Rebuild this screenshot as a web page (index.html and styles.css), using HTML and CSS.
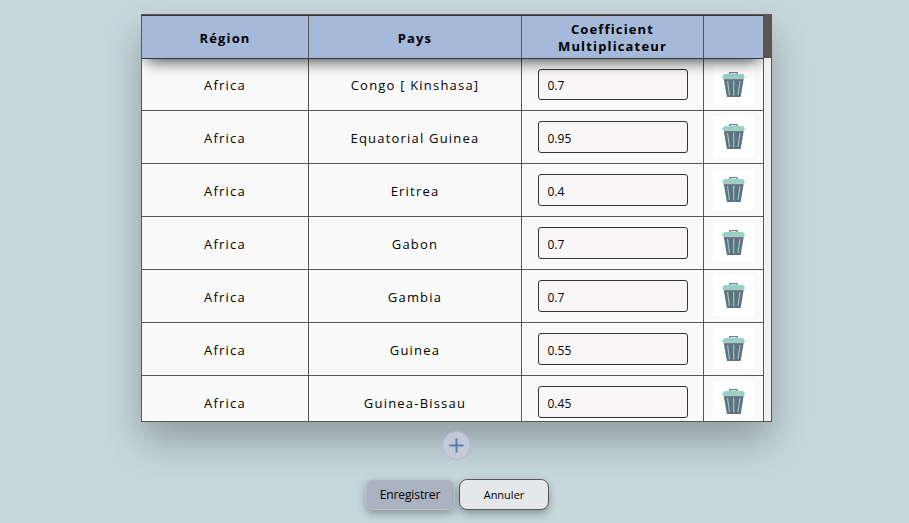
FILE: index.html
```html
<!DOCTYPE html>
<html lang="fr">
<head>
  <meta charset="UTF-8" />
  <meta name="viewport" content="width=device-width, initial-scale=1.0"/>
  <title>Coefficients par pays</title>
  <link rel="stylesheet" href="styles.css">
</head>
<body>
  <!-- Trash icon shared by all the rows -->
  <svg width="0" height="0" class="sprite">
    <symbol id="trash" viewBox="0 0 41 41">
      <path d="M16.8 10V8.7h7.4V10" fill="none" stroke="#6d8490" stroke-width="1.3"/>
      <path d="M10.6 14h20.2L27.7 33H13.9z" fill="#5f7180"/>
      <path d="M10.6 14h20.2v1.2H10.6z" fill="#b9c3c6"/>
      <path d="M11.6 10h18.4l1.8 2.2V14H9.4v-1.8z" fill="#95d3c4"/>
      <path d="M14.5 17l2 14M20.7 16.5V31.5M27 17l-2 14" fill="none" stroke="#8fcfc1" stroke-width="1.2"/>
    </symbol>
  </svg>

  <div class="table-box">
    <table>
      <colgroup>
        <col class="col-region"><col class="col-pays"><col class="col-coef"><col class="col-action">
      </colgroup>
      <thead>
        <tr>
          <th>Région</th>
          <th>Pays</th>
          <th>Coefficient Multiplicateur</th>
          <th></th>
        </tr>
      </thead>
      <tbody>
        <tr>
          <td>Africa</td>
          <td>Congo [ Kinshasa]</td>
          <td><input type="text" value="0.7"></td>
          <td><svg class="trash"><use href="#trash"/></svg></td>
        </tr>
        <tr>
          <td>Africa</td>
          <td>Equatorial Guinea</td>
          <td><input type="text" value="0.95"></td>
          <td><svg class="trash"><use href="#trash"/></svg></td>
        </tr>
        <tr>
          <td>Africa</td>
          <td>Eritrea</td>
          <td><input type="text" value="0.4"></td>
          <td><svg class="trash"><use href="#trash"/></svg></td>
        </tr>
        <tr>
          <td>Africa</td>
          <td>Gabon</td>
          <td><input type="text" value="0.7"></td>
          <td><svg class="trash"><use href="#trash"/></svg></td>
        </tr>
        <tr>
          <td>Africa</td>
          <td>Gambia</td>
          <td><input type="text" value="0.7"></td>
          <td><svg class="trash"><use href="#trash"/></svg></td>
        </tr>
        <tr>
          <td>Africa</td>
          <td>Guinea</td>
          <td><input type="text" value="0.55"></td>
          <td><svg class="trash"><use href="#trash"/></svg></td>
        </tr>
        <tr>
          <td>Africa</td>
          <td>Guinea-Bissau</td>
          <td><input type="text" value="0.45"></td>
          <td><svg class="trash"><use href="#trash"/></svg></td>
        </tr>
      </tbody>
    </table>
    <div class="scrollbar"><div class="thumb"></div></div>
  </div>

  <button class="add-btn" aria-label="Ajouter">
    <svg width="15" height="15" viewBox="0 0 15 15"><path d="M7.5 .5v14M.5 7.5h14" stroke="#5b7db5" stroke-width="2"/></svg>
  </button>

  <div class="actions">
    <button class="save-btn">Enregistrer</button>
    <button class="cancel-btn">Annuler</button>
  </div>
</body>
</html>
```

FILE: styles.css
```css
* {
  margin: 0;
  padding: 0;
  box-sizing: border-box;
}

body {
  height: 523px;
  overflow: hidden;
  padding: 14px 0 0 141px;
  background: #c7d8dc;
  color: #000;
  font-family: "Open Sans", "Noto Sans", sans-serif;
}

.sprite {
  display: none;
}

.table-box {
  display: flex;
  width: 631px;
  height: 408px;
  overflow: hidden;
  border: 1px solid #5a5552;
  background: #fafafa;
  box-shadow: 0 19px 38px rgba(0, 0, 0, 0.28);
}

table {
  width: 622px;
  height: 0;
  table-layout: fixed;
  border-collapse: separate;
  border-spacing: 0;
}

.col-region { width: 167px; }
.col-pays { width: 213px; }
.col-coef { width: 182px; }
.col-action { width: 60px; }

thead {
  position: sticky;
  top: 0;
  z-index: 1;
  box-shadow: 0 7px 16px -5px rgba(0, 0, 0, 0.75);
}

th {
  height: 44px;
  padding: 2px 20px 0;
  border: solid #3a3635;
  border-width: 1px 1px 1px 0;
  border-right-color: #5a5552;
  background: #a5b9da;
  font-size: 13px;
  line-height: 17px;
  letter-spacing: 1.15px;
}

td {
  height: 53px;
  border: solid #5a5552;
  border-width: 0 1px 1px 0;
  background: #fafafa;
  font-size: 13px;
  letter-spacing: 1.2px;
  text-align: center;
}

td:nth-child(-n+2) {
  padding-top: 1px;
}

tbody tr:first-child td {
  height: 52px;
}

input {
  display: block;
  width: 150px;
  height: 31.5px;
  margin: 0 auto;
  padding: 2px 9px 0;
  border: 1px solid #333;
  border-radius: 3px;
  background: #f8f6f7;
  font-family: inherit;
  font-size: 12px;
}

.trash {
  display: block;
  width: 41px;
  height: 41px;
  margin: 0 auto 1px;
  background: #fff;
}

.scrollbar {
  position: relative;
  z-index: 2;
  width: 7px;
  background: #f0eff0;
}

.thumb {
  height: 43px;
  background: #5a5552;
}

button {
  font-family: inherit;
  cursor: pointer;
}

.add-btn {
  display: flex;
  align-items: center;
  justify-content: center;
  position: relative;
  width: 29px;
  height: 29px;
  margin: 9px 0 0 301px;
  border: 1px solid #a8b7d8;
  border-radius: 50%;
  background: #c4c9d6;
}

.actions {
  display: flex;
  gap: 4px;
  margin: 19px 0 0 224px;
}

.actions button {
  width: 90px;
  height: 31px;
  border-radius: 8px;
  box-shadow: 0 4px 8px rgba(0, 0, 0, 0.3);
}

.actions .save-btn {
  border: 1px solid #b9c4d3;
  background: #abb2c1;
  font-size: 12px;
  letter-spacing: -0.1px;
}

.actions .cancel-btn {
  border: 1px solid #555;
  background: #e5e7eb;
  font-size: 11px;
}
```
